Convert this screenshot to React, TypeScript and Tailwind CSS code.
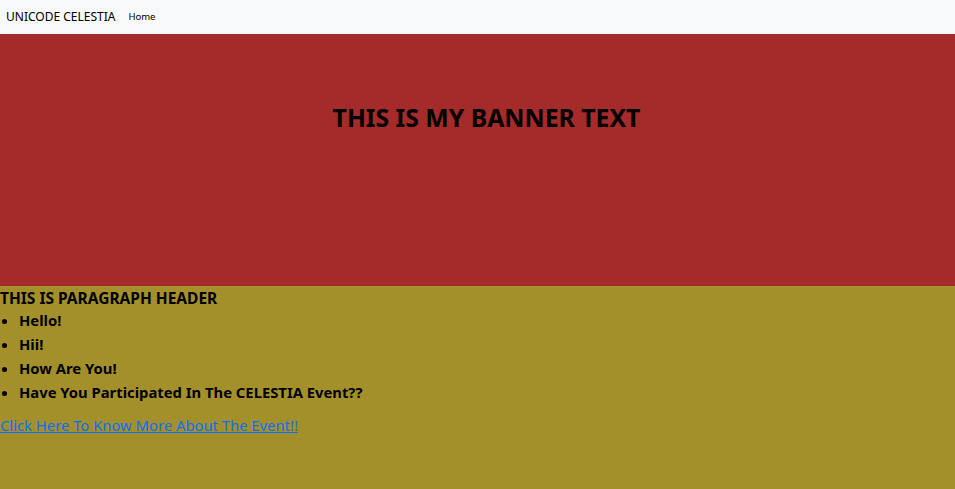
export default function App() {
  return (
    <div className="flex min-h-[489px] flex-col font-['Noto_Sans',sans-serif] text-black">
      <nav className="flex h-[34px] items-center gap-[13px] bg-[#f8f9fa] px-[6px]">
        <span className="text-[12px]">UNICODE CELESTIA</span>
        <a className="text-[9.5px]">Home</a>
      </nav>
      <div className="flex h-[252px] justify-center bg-[#a52a2a] pl-[18px] pt-[66px]">
        <h1 className="text-[24.8px] font-bold leading-[34px]">THIS IS MY BANNER TEXT</h1>
      </div>
      <div className="flex-1 bg-[#a4902a] pt-[2px]">
        <h3 className="text-[15.5px] font-bold leading-[20px]">THIS IS PARAGRAPH HEADER</h3>
        <ul className="list-disc pl-[19px] text-[14.8px] font-bold leading-[24px]">
          <li>Hello!</li>
          <li>Hii!</li>
          <li>How Are You!</li>
          <li>Have You Participated In The CELESTIA Event??</li>
        </ul>
        <a href="#" className="mt-[10px] block text-[14.8px] text-[#0d6efd] underline">
          Click Here To Know More About The Event!!
        </a>
      </div>
    </div>
  );
}
